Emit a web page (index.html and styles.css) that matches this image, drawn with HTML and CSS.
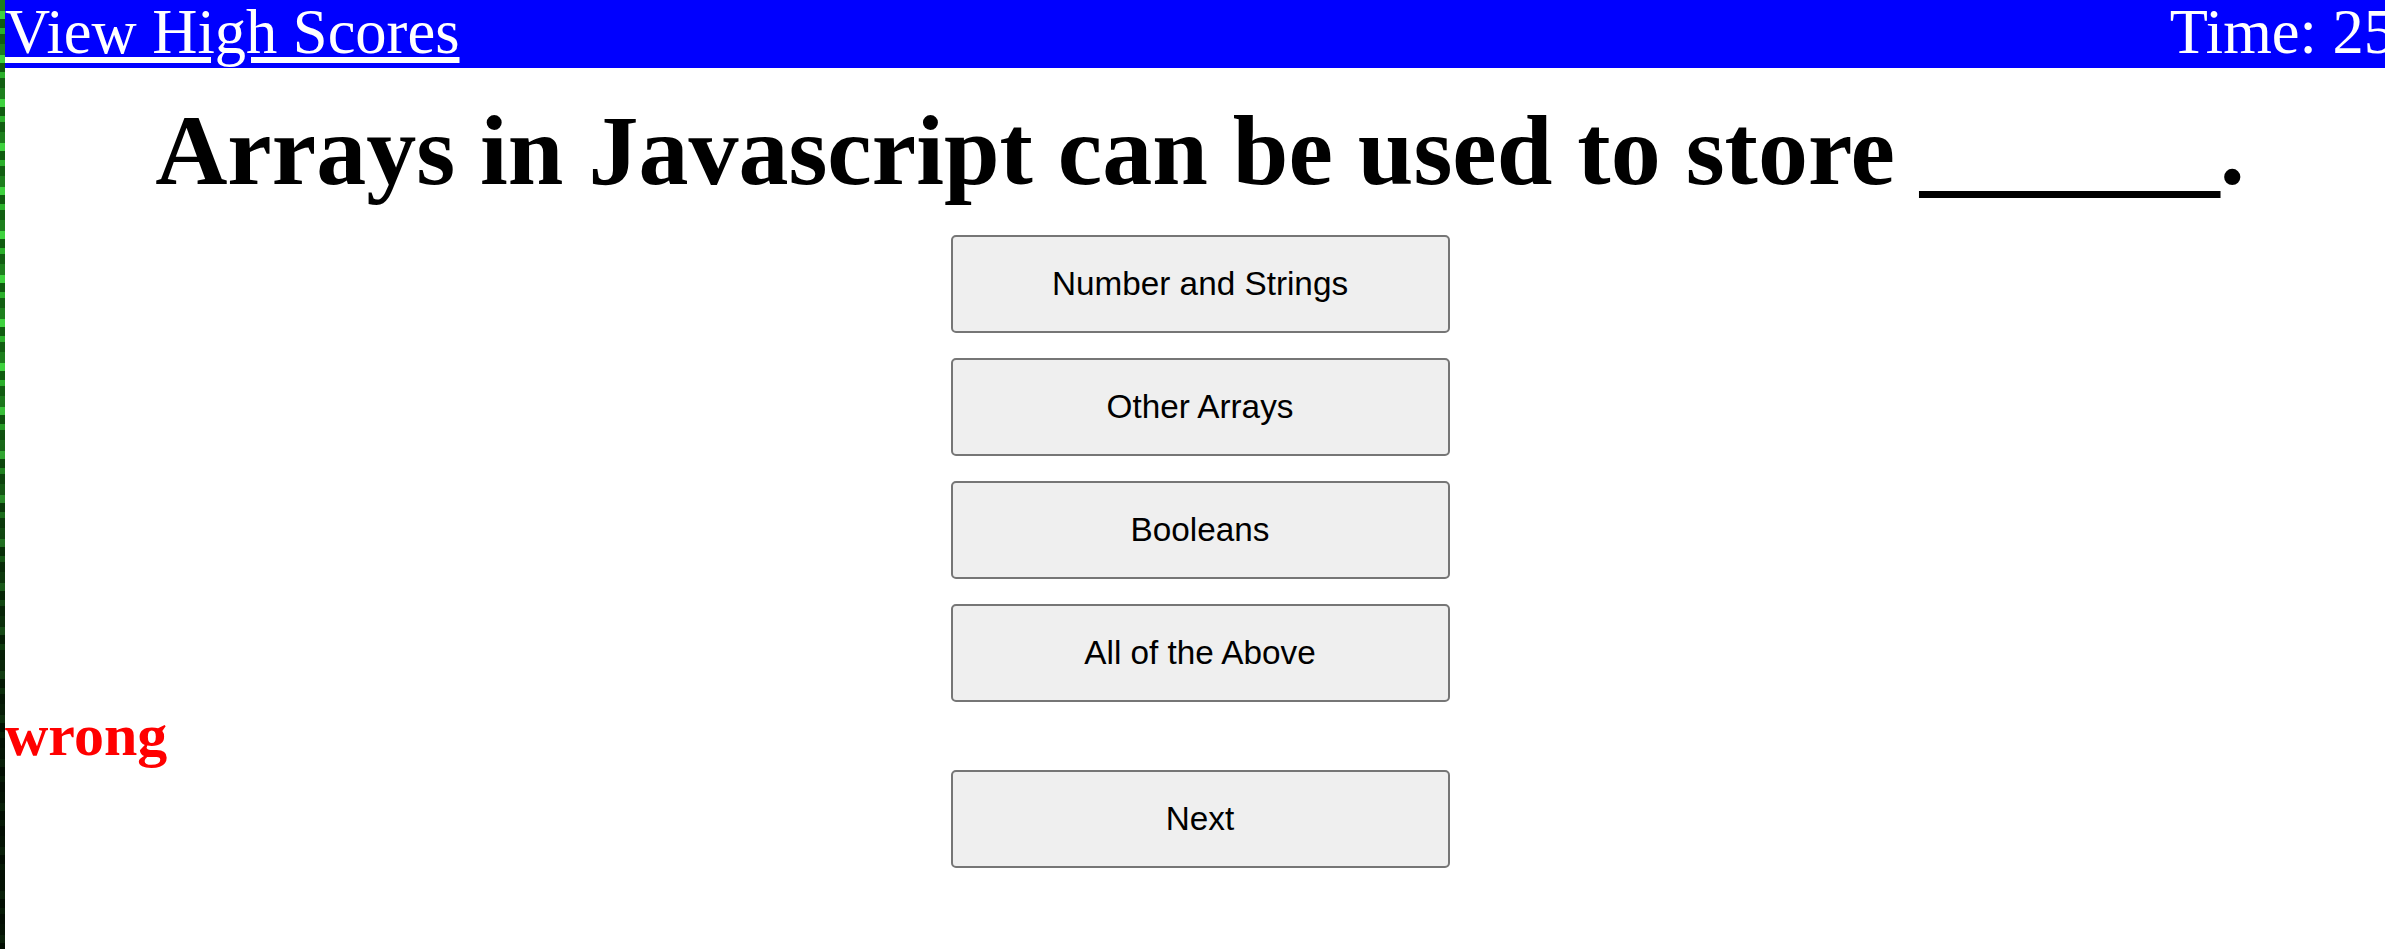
FILE: index.html
```html
<!DOCTYPE html>
<html lang="en">
<head>
<meta charset="utf-8">
<title>Code Quiz</title>
<link rel="stylesheet" href="styles.css">
</head>
<body>
<div class="page">
  <header class="topbar">
    <a class="scores-link" href="#">View High Scores</a>
    <span class="timer">Time: 25</span>
  </header>
  <main class="quiz">
    <h1 class="question">Arrays in Javascript can be used to store ______.</h1>
    <div class="choices">
      <button class="btn">Number and Strings</button>
      <button class="btn">Other Arrays</button>
      <button class="btn">Booleans</button>
      <button class="btn">All of the Above</button>
    </div>
    <div class="feedback">wrong</div>
    <div class="next-row">
      <button class="btn">Next</button>
    </div>
  </main>
</div>
</body>
</html>
```

FILE: styles.css
```css
html, body {
  margin: 0;
  padding: 0;
  height: 100%;
  overflow: hidden;
}

body {
  font-family: "Liberation Serif", "Times New Roman", serif;
  background:
    linear-gradient(to bottom, rgba(0,0,0,0) 0%, rgba(0,0,0,0) 40%, rgba(0,0,0,0.55) 60%, rgba(0,0,0,0.85) 80%, rgba(0,0,0,0.85) 100%),
    repeating-linear-gradient(to bottom, #1d7f1d 0px, #1d7f1d 11px, #3ed23e 11px, #3ed23e 19px, #0f5c0f 19px, #0f5c0f 28px, #2bb02b 28px, #2bb02b 34px, #125f12 34px, #125f12 44px);
}

.page {
  margin-left: 5px;
  width: 2390px;
  min-height: 100%;
  background: #ffffff;
}

.topbar {
  display: flex;
  justify-content: space-between;
  align-items: flex-start;
  height: 68px;
  background: #0000ff;
  font-size: 62.5px;
  line-height: 64px;
  color: #ffffff;
}

.scores-link {
  color: #ffffff;
  text-decoration: underline;
}

.timer {
  color: #ffffff;
}

.quiz {
  display: flex;
  flex-direction: column;
}

.question {
  margin: 25px 0 27px;
  font-size: 100px;
  line-height: 115px;
  font-weight: bold;
  text-align: center;
  color: #000000;
}

.choices {
  display: flex;
  flex-direction: column;
  align-items: center;
  gap: 25px;
}

.btn {
  width: 499px;
  height: 98px;
  margin: 0;
  padding: 0;
  background: #efefef;
  border: 2px solid #767676;
  border-radius: 5px;
  font-family: "Liberation Sans", Arial, sans-serif;
  font-size: 33.3px;
  color: #000000;
}

.feedback {
  font-size: 60px;
  line-height: 66px;
  font-weight: bold;
  color: #ff0000;
}

.next-row {
  display: flex;
  justify-content: center;
  margin-top: 2px;
}
```
